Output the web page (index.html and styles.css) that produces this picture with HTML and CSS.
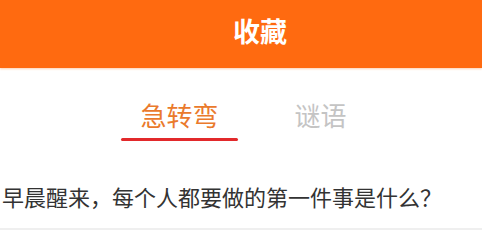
FILE: index.html
```html
<!DOCTYPE html>
<html lang="zh-CN">
<head>
<meta charset="utf-8">
<title>收藏</title>
<link rel="stylesheet" href="styles.css">
</head>
<body>
<header class="topbar">
  <h1 class="topbar-title">收藏</h1>
</header>
<nav class="tabs">
  <div class="tab tab-active">
    <span class="tab-label">急转弯</span>
    <span class="tab-line"></span>
  </div>
  <div class="tab">
    <span class="tab-label">谜语</span>
  </div>
</nav>
<section class="list">
  <div class="item">早晨醒来，每个人都要做的第一件事是什么？</div>
</section>
</body>
</html>
```
FILE: styles.css
```css
html, body {
  margin: 0;
  padding: 0;
  background: #ffffff;
  font-family: "Noto Sans CJK SC", "Noto Sans", sans-serif;
}

.topbar {
  height: 68px;
  box-sizing: border-box;
  padding-bottom: 6px;
  padding-left: 38px;
  background: #ff6a10;
  box-shadow: 0 1px 2px rgba(255, 120, 30, 0.35);
  display: flex;
  justify-content: center;
  align-items: center;
}

.topbar-title {
  margin: 0;
  font-size: 27px;
  line-height: 62px;
  font-weight: 700;
  color: #ffffff;
}

.tabs {
  display: flex;
  padding-top: 30px;
  padding-left: 121px;
  gap: 24px;
}

.tab {
  width: 117px;
  display: flex;
  flex-direction: column;
  align-items: center;
}

.tab-label {
  font-size: 26px;
  line-height: 34px;
  color: #c4c4c4;
}

.tab-active .tab-label {
  color: #ea7a2c;
}

.tab-line {
  display: block;
  width: 117px;
  height: 3px;
  margin-top: 6px;
  background: #e2292b;
  border-radius: 2px;
}

.list {
  margin-top: 40px;
}

.item {
  padding-left: 2px;
  padding-bottom: 17px;
  font-size: 22px;
  line-height: 30px;
  color: #333333;
  border-bottom: 2px solid #efefef;
  white-space: nowrap;
}
```
